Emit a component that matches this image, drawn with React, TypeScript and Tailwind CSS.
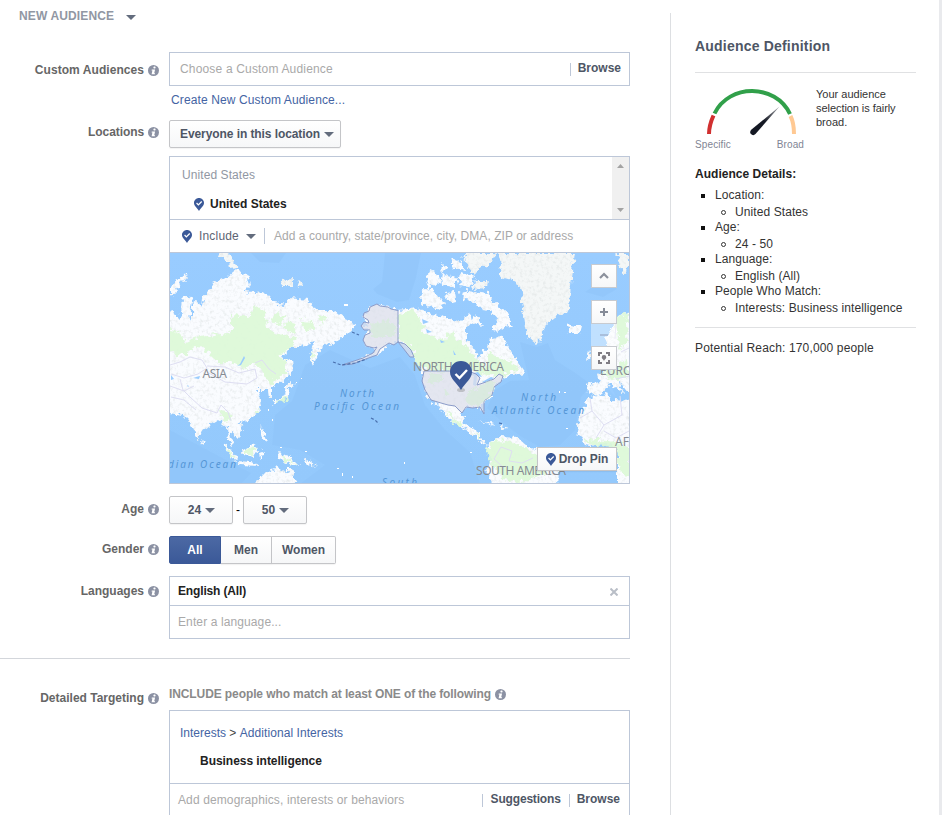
import React from "react";

const PIN = "M7 0C3.1 0 0 3 0 6.8 0 11 4.2 13.200 7 18c2.800-4.800 7-7 7-11.200C14 3 10.900 0 7 0Z";

function Info({ className = "" }: { className?: string }) {
  return (
    <svg className={`h-[11px] w-[11px] shrink-0 ${className}`} viewBox="0 0 11 11">
      <circle cx="5.500" cy="5.500" r="5.500" fill="#8b91a3" />
      <rect x="5.400" y="1.600" width="2.200" height="1.900" rx=".8" fill="#fff" />
      <path d="M3.800 4.400h3.300L6.200 8.300h.9l-.2 1H3.600l.8-3.800h-.9Z" fill="#fff" />
    </svg>
  );
}

function Caret({ className = "" }: { className?: string }) {
  return (
    <svg className={`h-[5px] w-[10px] shrink-0 ${className}`} viewBox="0 0 10 5">
      <path d="M0 0h10L5 5Z" fill="#636c7d" />
    </svg>
  );
}

function Pin({ className = "" }: { className?: string }) {
  return (
    <svg className={`h-[13px] w-[10px] shrink-0 ${className}`} viewBox="0 0 14 18">
      <path d={PIN} fill="#3b5998" />
      <path d="m3.600 7 2.500 2.500 4.700-4.700" fill="none" stroke="#fff" strokeWidth="1.800" />
    </svg>
  );
}

function Row({ label, className, labelClass, children }: { label: React.ReactNode; className: string; labelClass: string; children: React.ReactNode }) {
  return (
    <div className={`flex w-[630px] items-start ${className}`}>
      <div className={`mr-[10px] flex w-[159px] shrink-0 justify-end font-bold leading-[14px] text-[#666] ${labelClass}`}>
        {label}
        <Info className="ml-[4px] mt-[2px]" />
      </div>
      <div className="w-[461px]">{children}</div>
    </div>
  );
}

const BTN = "flex items-center justify-center border border-[#c4c5c8] bg-linear-to-b from-white to-[#f6f7f8] font-bold text-[#4e5665] shadow-[0_1px_1px_rgba(0,0,0,.05)]";

const ICE = [
  "M497 253H575L573 270 570 293 569 310 555 317 546 325 541 337 537 345 528 337 525 323 523 307 520 287 508 278 498 275 503 265Z",
  "M218 253H229L231 260 238 267 230 268 229 261 220 258Z",
  "M282 280 294 279 294 286 283 286Z M297 281 303 283 299 287Z",
  "M465 253H496L488 266 478 268 475 275 469 268Z M464 255 469 265 461 258Z M475 281H488L486 288 472 289Z",
  "M616 253H629V270L623 275Z",
];

const LAND = [
  // Eurasia
  "M168 310 175 315 180 320 183 300 188 295 192 300 190 322 193 318 193 303 197 300 202 308 203 298 208 292 213 283 227 277 237 269 247 275 250 285 243 292 255 293 265 292 273 303 285 305 288 298 308 300 315 310 332 310 345 318 355 325 353 330 343 337 333 345 325 343 318 353 313 365 310 358 312 347 315 342 302 347 290 347 283 357 290 365 287 377 280 383 272 387 272 397 268 397 267 390 258 390 260 397 262 405 258 413 248 420 240 422 243 432 237 438 230 432 233 447 228 440 227 427 218 420 202 430 198 440 190 422 183 415 168 413Z",
  "M170 290 175 281 185 273 187 277 180 284 174 294 170 296Z",
  // Asian islands and Australia
  "M222 442 228 446 238 460 233 459Z M238 461 250 462 260 466 240 465Z M243 450 255 444 257 450 252 458 244 455Z M259 452 265 450 263 456 260 459Z M277 453 290 456 300 466 289 464 280 460Z M303 458 310 461 317 467 306 463Z",
  "M260 425 264 431 268 442 262 439Z M289 380 295 384 289 387 288 397 279 401 273 405 274 401 284 397Z M201 439 204 442 202 444Z M240 424 244 421 243 425Z M286 362 291 358 292 374 289 375Z",
  "M253 485 265 473 278 468 287 472 290 466 297 485Z",
  // North America
  "M397 310 417 308 427 313 447 318 460 322 470 312 472 322 467 328 467 340 474 348 479 360 482 352 488 347 490 338 503 337 506 345 510 350 518 363 525 373 512 375 503 378 495 387 492 397 482 405 483 415 480 407 467 407 462 413 465 424 472 428 480 433 480 437 488 445 482 443 475 436 467 431 453 423 443 410 433 400 446 418 437 407 427 395 423 383 423 372 413 355 407 345 398 342 390 343 378 354 353 362 373 353 375 348 365 345 363 340 370 330 362 327 368 323 363 317 370 307 377 304 388 307Z",
  "M422 289 433 290 437 297 445 302 441 310 428 307 421 301Z M445 292 455 291 456 301 449 303Z M460 292 468 290 480 292 488 293 495 303 508 313 512 327 507 326 500 331 491 330 498 321 490 311 482 310 475 301 463 300Z M475 315 484 326 470 323Z",
  "M430 270 438 274 441 282 435 286 427 282Z M451 258 462 262 465 270 454 268Z M441 263 446 268 443 275Z M443 274 459 278 453 288 441 286Z M461 272 475 277 470 288 459 286Z M425 281 432 286 428 290Z",
  "M478 421 488 423 497 426 490 425Z M501 426 508 428 501 429Z",
  // South America
  "M487 450 488 445 500 437 518 438 528 447 538 450 552 460 558 470 557 486H495L485 470 492 460Z",
  // Iceland, Europe and Africa
  "M567 324 575 326 583 326 581 333 570 333Z M591 355 596 350 602 367 592 368 594 360Z M588 350 591 357 586 361Z",
  "M608 344 606 338 618 317 632 310V393L624 388 618 379 623 393 610 383 603 393 596 396 588 393 587 384 600 382 598 375 606 368 612 359 608 351Z",
  "M590 397 608 394 611 400 632 401V486H617V447L605 443 590 446 585 445 577 433 579 417Z",
];

const GREEN = [
  "M168 330 181 332 185 342 200 337 215 335 232 332 232 315 250 317 253 305 265 310 267 327 275 333 296 338 292 346 280 355 286 362 286 373 270 384 264 375 257 363 245 369 232 362 218 362 208 352 198 345 185 355 168 353Z",
  "M273 314 284 315 281 326 274 322Z M300 320 313 321 315 331 302 328Z M317 316 326 318 322 326Z M284 322 297 324 294 333 286 330Z M219 410 232 412 230 421 223 422Z M253 412 259 409 257 415Z M245 449 256 447 251 456 245 455Z M281 456 290 459 297 464 284 461Z M226 446 235 458 231 457Z M275 402 286 397 288 399 276 404Z M311 352 315 354 312 362Z",
  "M399 313 414 310 423 325 422 333 444 340 452 332 460 342 470 350 480 363 486 366 488 352 495 357 512 361 518 370 502 376 487 375 470 371 430 371 417 364 411 348 399 339Z",
  "M448 410 455 420 466 426 460 427 452 422Z M474 432 481 438 479 439Z",
  "M487 448 497 440 514 442 526 448 536 455 549 462 546 474 530 480 507 482 498 472 489 462Z",
  "M614 320 628 312 627 340 620 352 617 332Z M602 372 627 361 629 377 610 380Z M581 438 615 442 629 447 629 480 619 470 616 449 590 444Z",
];

function WorldMap() {
  return (
    <svg className="absolute inset-0 h-[231px] w-[459px]" viewBox="170 253 459 231" fontFamily="'Noto Sans', sans-serif">
      <defs>
        <filter id="coast" filterUnits="userSpaceOnUse" x="160" y="243" width="480" height="250" colorInterpolationFilters="sRGB">
          <feTurbulence type="fractalNoise" baseFrequency=".2" numOctaves="3" seed="8" result="n" />
          <feDisplacementMap in="SourceGraphic" in2="n" scale="8" xChannelSelector="R" yChannelSelector="G" result="d" />
          <feTurbulence type="fractalNoise" baseFrequency=".3" numOctaves="4" seed="3" result="t" />
          <feColorMatrix in="t" values="0 0 0 0 .86  0 0 0 0 .88  0 0 0 0 .88  1.500 0 0 0 -.720" result="s" />
          <feComposite in="s" in2="d" operator="in" result="speckle" />
          <feMerge>
            <feMergeNode in="d" />
            <feMergeNode in="speckle" />
          </feMerge>
        </filter>
        <filter id="forest" filterUnits="userSpaceOnUse" x="160" y="243" width="480" height="250" colorInterpolationFilters="sRGB">
          <feTurbulence type="fractalNoise" baseFrequency=".2" numOctaves="3" seed="8" result="n" />
          <feDisplacementMap in="SourceGraphic" in2="n" scale="10" xChannelSelector="R" yChannelSelector="G" />
        </filter>
        <linearGradient id="sea" x2="0" y2="1">
          <stop stopColor="#99ccff" />
          <stop offset=".6" stopColor="#95cafd" />
          <stop offset="1" stopColor="#94c9fc" />
        </linearGradient>
      </defs>
      <rect x="170" y="253" width="459" height="231" fill="url(#sea)" />
      <g fill="#8ec3f8" opacity=".45">
        <path d="M251 253H286L279 263 260 262Z M385 253H421L416 278 409 300 397 302 377 294 373 289 382 282Z M520 342 537 347 548 343 555 360 574 372 592 385 581 397 575 430 560 445 540 447 520 436 500 420 487 408 495 390 510 381 529 380 524 359Z M305 365 330 350 370 368 400 357 415 375 425 405 445 430 470 452 480 484H300L325 465 300 450 272 445 275 415 292 401Z" />
        <path d="M585 292 607 277 617 289 603 297Z M170 430 198 445 228 461 251 473 241 484H170Z" />
      </g>
      <g filter="url(#coast)">
        {LAND.map((d) => <path key={d} d={d} fill="#fafcff" />)}
        {ICE.map((d) => <path key={d} d={d} fill="#f4f7f7" />)}
      </g>
      <g filter="url(#forest)">
        {GREEN.map((d) => <path key={d} d={d} fill="#dcf8d7" fillOpacity=".92" />)}
      </g>
      {/* lakes and inland seas */}
      <g fill="#99ccff">
        <path d="m237 366 3-2 4-8 1 2-4 7Z M193 378l7-2-1 3Z M187 385l2 1-1 1Z M171 375l3 4-3 1Z M422 319l7 3-6 2Z M426 329l6 3-5 1Z M440 340l5 2-4 1Z M453 350l3 5-2 0Z" />
        <path d="M470 374l8-2 4 5-5-1-1 10-3-1 1-9Z M482 382l9-5 3 1-9 5Z M607 385l5 3 4 9-5-5Z" />
      </g>
      <g fill="none" stroke="#dedef2" strokeWidth="1">
        <path d="M170 365 180 362 190 357 202 360 207 368 198 374 184 378 171 374 M207 366 225 367 239 373 255 369 257 378 247 384 225 382 207 372 M180 379 183 390 190 397 202 408 217 413 221 405 228 412 231 421 M171 397 184 400 196 410 M170 386 184 391 194 386 M255 363 262 360 269 369 276 374" />
        <path d="M590 398 592 411 580 418 M592 411 604 425 596 438 M604 425 622 415 620 396 M604 431 616 438 629 431 M610 377 610 368 620 371 629 366 M616 379 629 376 M501 447 512 451 509 461 522 463 533 458 M501 447 494 459 504 468 M615 339 616 322 M621 352 629 348" />
      </g>
      {/* selected country: Alaska and the contiguous states */}
      <g fill="#dcdfeb" fillOpacity=".75" stroke="#8c9cc9" strokeWidth="1" strokeLinejoin="round">
        <path d="M398 310.500 391 309 388 307 380 306 377 304 370 307 369 311 364 313 363 317 368 320 369 323 364 322 361 326 364 330 370 330 370 333 365 335 363 340 366 346 374 348 377 347 373 353 363 358 354 361 342 365 353 364 363 360 377 355 380 349 389 343 394 345 398 342Z" />
        <path d="M398 342 405 344 411 350 414 357 410 357 403 348Z" />
        <path d="M424 371 450 371 468 371 476 374 480 378 477 385 486 382 494 379 499 374 503 376 501 382 494 387 492 395 484 401 484 414 480 407 473 408 466 407 462 413 455 406 448 405 441 403 431 400 425 390 422 381Z" />
      </g>
      <g fill="#d3efd3" opacity=".55" filter="url(#forest)">
        <path d="M370 325 389 319 396 328 394 337 371 337Z M428 374 442 373 442 381 434 384 428 381Z M444 388 450 390 449 396 445 394Z M467 391 478 389 488 382 495 385 489 396 480 406 466 404Z" />
      </g>
      <g fill="none" stroke="#4a70ae" strokeWidth="1.200" strokeDasharray="3 2">
        <path d="m333 362 8 3 14-2 12-4M352 332l7 3M371 418l4 2 4 4M499 423l5 1" />
      </g>
      <g fill="#fff">
        <path d="M268 409h1v2h-1Z M275 399h1v2h-1Z M301 378h1v1h-1Z M296 382h1v1h-1Z M344 304h4v2h-4Z M404 462h1v2h-1Z M337 468h2v1h-2Z M342 473h1v3h-1Z M352 476h1v2h-1Z M559 391h1v2h-1Z M564 392h2v1h-2Z M566 428h2v1h-2Z M470 452h2v1h-2Z M272 419h1v2h-1Z M305 451h2v1h-2Z M280 447h2v1h-2Z" />
      </g>
      <g fill="#868b93" fontSize="12">
        <text x="202.500" y="378" textLength="24.500">ASIA</text>
        <text x="413" y="370.500" textLength="91">NORTH AMERICA</text>
        <text x="476" y="474.500" textLength="90">SOUTH AMERICA</text>
        <text x="600" y="374.500">EUROPE</text>
        <text x="615" y="446">AFRICA</text>
      </g>
      <g fill="#5596d6" fontStyle="italic" fontSize="10">
        <text x="340" y="397" textLength="34">North</text>
        <text x="314" y="410" textLength="85">Pacific Ocean</text>
        <text x="521" y="401" textLength="35">North</text>
        <text x="492" y="414" textLength="92">Atlantic Ocean</text>
        <text x="155" y="468" textLength="81">Indian Ocean</text>
        <text x="382" y="486" textLength="35">South</text>
      </g>
      <ellipse cx="461" cy="390" rx="4" ry="2" fill="#777" opacity=".35" />
      <path transform="translate(450 361) scale(1.570 1.610)" d={PIN} fill="#3b5998" />
      <path d="m455.500 374 4 4 7.500-8" fill="none" stroke="#fff" strokeWidth="2.400" />
    </svg>
  );
}

const MAPBTN = "flex h-[24px] w-[26px] items-center justify-center border border-[#c8cbd0] bg-linear-to-b from-white to-[#f6f7f8]";

function MapPanel() {
  return (
    <div className="relative h-[230px] overflow-hidden bg-[#99ccff]">
      <WorldMap />
      <div className="absolute left-[421px] top-[11px] flex w-[26px] flex-col">
        <div className={`${MAPBTN} mb-[12px]`}>
          <svg className="h-[8px] w-[10px]" viewBox="0 0 10 8"><path d="m1 6 4-4 4 4" fill="none" stroke="#8c919c" strokeWidth="2.200" /></svg>
        </div>
        <div className={MAPBTN}>
          <svg className="h-[8px] w-[8px]" viewBox="0 0 8 8"><path d="M4 0v8M0 4h8" stroke="#858b97" strokeWidth="2" /></svg>
        </div>
        <div className="flex h-[22px] items-center justify-center bg-white/40">
          <div className="h-[2px] w-[8px] bg-[#a9bfdc]" />
        </div>
        <div className={MAPBTN}>
          <svg className="h-[12px] w-[12px]" viewBox="0 0 12 12" fill="none" stroke="#7f7c83" strokeWidth="2">
            <path d="M1 4V1h3M8 1h3v3M11 8v3H8M4 11H1V8" />
            <path d="M6 3a2.300 2.300 0 0 0-2.300 2.300C3.700 6.600 5.300 7.300 6 9c.7-1.700 2.300-2.400 2.300-3.700A2.300 2.300 0 0 0 6 3Z" fill="#7f7c83" stroke="none" />
          </svg>
        </div>
      </div>
      <div className={`${BTN} absolute left-[367px] top-[194px] h-[24px] w-[80px]`}>
        <Pin className="mr-[3px]" />
        <span className="tracking-[-0.05px]">Drop Pin</span>
      </div>
    </div>
  );
}

function Gauge() {
  return (
    <svg className="h-[48px] w-[90px]" viewBox="706 88 90 48" fill="none" strokeWidth="4">
      <defs>
        <linearGradient id="needle" gradientUnits="userSpaceOnUse" x1="764" y1="121" x2="780" y2="105">
          <stop stopColor="#141823" />
          <stop offset="1" stopColor="#141823" stopOpacity=".35" />
        </linearGradient>
      </defs>
      <path d="M709 134C709 127 711 121 713.500 115.500" stroke="#d13030" />
      <path d="M714.500 113.500C729 83.500 775.500 83.500 790 114" stroke="#31a04a" />
      <path d="M790.500 116C793 121 794 127 794 134" stroke="#ffc993" />
      <path d="M779.500 106.500 755.500 134Q753 136.500 750.500 133.500Q749.500 131.500 751.500 129.500Z" fill="url(#needle)" />
    </svg>
  );
}

const DETAILS = [
  ["Location:", "United States"],
  ["Age:", "24 - 50"],
  ["Language:", "English (All)"],
  ["People Who Match:", "Interests: Business intelligence"],
];

function Sidebar() {
  return (
    <aside className="mt-[13px] h-[802px] w-[269px] border-l border-[#dddfe2] pl-[24px] text-[#333]">
      <h2 className="mt-[24px] text-[14px] font-bold leading-[18px] tracking-[0.2px] text-[#4e5665]">Audience Definition</h2>
      <div className="mt-[17px] w-[221px] border-t border-[#e0e1e3]" />
      <div className="mt-[15px] flex h-[64px]">
        <div className="w-[121px]">
          <div className="pl-[11px]"><Gauge /></div>
          <div className="mt-[2px] flex w-[109px] justify-between text-[10px] leading-[14px] text-[#7f8594]">
            <span className="tracking-[0.12px]">Specific</span>
            <span className="tracking-[0.1px]">Broad</span>
          </div>
        </div>
        <p className="-mt-px text-[11px] leading-[14px]">
          <span>Your audience</span><br /><span className="tracking-[-0.06px]">selection is fairly</span><br />broad.
        </p>
      </div>
      <h3 className="mt-[15px] font-bold leading-[14px] tracking-[0.03px] text-[#222]">Audience Details:</h3>
      <ul className="mt-[6px] tracking-[0.09px]">
        {DETAILS.map(([name, value]) => (
          <li key={name} className="h-[32px] leading-[16px]">
            <div className="flex items-center">
              <i className="ml-[6px] mr-[10px] mt-[2px] h-[4px] w-[4px] bg-[#111]" />
              <span>{name}</span>
            </div>
            <div className="flex items-center pt-px">
              <i className="ml-[26px] mr-[9px] h-[5px] w-[5px] rounded-full border border-[#333]" />
              <span>{value}</span>
            </div>
          </li>
        ))}
      </ul>
      <div className="mt-[12px] w-[221px] border-t border-[#e0e1e3]" />
      <p className="mt-[13px] leading-[14px] tracking-[0.15px]">Potential Reach: 170,000 people</p>
    </aside>
  );
}

export default function App() {
  return (
    <div className="flex h-[815px] w-[942px] overflow-hidden whitespace-nowrap bg-white font-['Liberation_Sans',Arial,sans-serif] text-[12px]">
      <main className="h-[815px] w-[670px] shrink-0 overflow-hidden">
        <div className="flex h-[52px] items-start pl-[19px] pt-[9px] font-bold leading-[14px] text-[#9197a3]">
          <span className="tracking-[0.13px]">NEW AUDIENCE</span>
          <Caret className="ml-[12px] mt-[6px]" />
        </div>

        <Row label={<span className="tracking-[0.06px]">Custom Audiences</span>} className="h-[68px]" labelClass="pt-[11px]">
          <div className="flex h-[34px] items-center border border-[#bdc7d8] pl-[10px]">
            <span className="flex-1 tracking-[0.17px] text-[#a9a9a9]">Choose a Custom Audience</span>
            <span className="mr-[7px] h-[13px] w-px bg-[#bdc7d8]" />
            <span className="mr-[8px] pb-[2px] font-bold text-[#4e5665]">Browse</span>
          </div>
          <div className="mt-[7px] pl-[2px] leading-[14px] tracking-[0.12px] text-[#4464a3]">Create New Custom Audience...</div>
        </Row>

        <Row label={<span className="tracking-[-0.08px]">Locations</span>} className="h-[376px]" labelClass="pt-[5px]">
          <div className={`${BTN} h-[28px] w-[172px] justify-start rounded-[2px] pl-[10px]`}>
            <span className="tracking-[-0.08px]">Everyone in this location</span>
            <Caret className="ml-[4px]" />
          </div>
          <div className="mt-[8px] border border-[#bdc7d8]">
            <div className="flex h-[63px] border-b border-[#bdc7d8]">
              <div className="flex-1 pl-[12px] pt-[11px] leading-[14px]">
                <div className="tracking-[0.08px] text-[#9197a3]">United States</div>
                <div className="mt-[15px] flex items-center pl-[12px] font-bold text-[#222]">
                  <Pin className="mr-[6px]" />
                  <span>United States</span>
                </div>
              </div>
              <div className="flex w-[17px] flex-col items-center justify-between bg-[#f0f0f0] pb-[7px] pt-[7px]">
                <svg className="h-[4px] w-[7px]" viewBox="0 0 7 4"><path d="M0 4h7L3.500 0Z" fill="#a3a3a3" /></svg>
                <svg className="h-[4px] w-[7px]" viewBox="0 0 7 4"><path d="M0 0h7L3.500 4Z" fill="#a3a3a3" /></svg>
              </div>
            </div>
            <div className="flex h-[33px] items-center border-b border-[#bdc7d8] pl-[12px]">
              <Pin className="mr-[7px]" />
              <span className="tracking-[0.18px] text-[#5d6473]">Include</span>
              <Caret className="ml-[7px]" />
              <span className="ml-[8px] mr-[9px] h-[16px] w-px bg-[#bdc7d8]" />
              <span className="tracking-[0.045px] text-[#a9a9a9]">Add a country, state/province, city, DMA, ZIP or address</span>
            </div>
            <MapPanel />
          </div>
        </Row>

        <Row label="Age" className="h-[40px]" labelClass="pt-[6px]">
          <div className="flex items-center">
            <div className={`${BTN} h-[28px] w-[64px] rounded-[2px] pl-px`}>24<Caret className="ml-[4px]" /></div>
            <span className="w-[10px] text-center">-</span>
            <div className={`${BTN} h-[28px] w-[64px] rounded-[2px] pl-px`}>50<Caret className="ml-[4px]" /></div>
          </div>
        </Row>

        <Row label="Gender" className="h-[40px]" labelClass="pt-[6px]">
          <div className="flex">
            <div className="flex h-[28px] w-[52px] items-center justify-center rounded-l-[2px] border border-[#3b5998] bg-linear-to-b from-[#4c69a4] to-[#3b5998] font-bold text-white">All</div>
            <div className={`${BTN} h-[28px] w-[51px] border-l-0`}>Men</div>
            <div className={`${BTN} h-[28px] w-[64px] rounded-r-[2px] border-l-0`}>Women</div>
          </div>
        </Row>

        <Row label="Languages" className="h-[82px]" labelClass="pt-[8px]">
          <div className="h-[63px] border border-[#bdc7d8]">
            <div className="flex h-[29px] items-center justify-between border-b border-[#bdc7d8] pl-[8px] pr-[11px]">
              <span className="font-bold tracking-[-0.15px] text-[#222]">English (All)</span>
              <svg className="mt-[2px] h-[8px] w-[8px]" viewBox="0 0 8 8"><path d="m.5.5 7 7M7.500.5l-7 7" stroke="#b9bec7" strokeWidth="2" /></svg>
            </div>
            <div className="flex h-[32px] items-center pl-[8px] tracking-[0.11px] text-[#a9a9a9]">Enter a language...</div>
          </div>
        </Row>

        <div className="h-[29px] w-[630px] border-t border-[#d3d6db]" />

        <Row label="Detailed Targeting" className="h-[128px]" labelClass="pt-[4px]">
          <div className="flex h-[23px] items-start font-bold leading-[14px] text-[#8a8a8a]">
            <span className="tracking-[-0.1px]">INCLUDE people who match at least ONE of the following</span>
            <Info className="ml-[4px] mt-[2px]" />
          </div>
          <div className="h-[130px] border border-[#bdc7d8]">
            <div className="h-[73px] border-b border-[#bdc7d8] pl-[10px] pt-[15px] leading-[14px]">
              <div className="text-[#444]"><span className="text-[#4464a3]">Interests</span> &gt; <span className="tracking-[0.07px] text-[#4464a3]">Additional Interests</span></div>
              <div className="mt-[14px] pl-[20px] font-bold tracking-[-0.04px] text-[#222]">Business intelligence</div>
            </div>
            <div className="flex h-[32px] items-center pl-[8px]">
              <span className="flex-1 tracking-[0.12px] text-[#a9a9a9]">Add demographics, interests or behaviors</span>
              <span className="mr-[8px] h-[13px] w-px bg-[#bdc7d8]" />
              <span className="pb-[2px] font-bold tracking-[-0.18px] text-[#4e5665]">Suggestions</span>
              <span className="ml-[8px] mr-[7px] h-[13px] w-px bg-[#bdc7d8]" />
              <span className="mr-[9px] pb-[2px] font-bold text-[#4e5665]">Browse</span>
            </div>
          </div>
        </Row>
      </main>
      <Sidebar />
      <div className="h-[815px] w-[3px] shrink-0 bg-[#e9eaed]" />
    </div>
  );
}
